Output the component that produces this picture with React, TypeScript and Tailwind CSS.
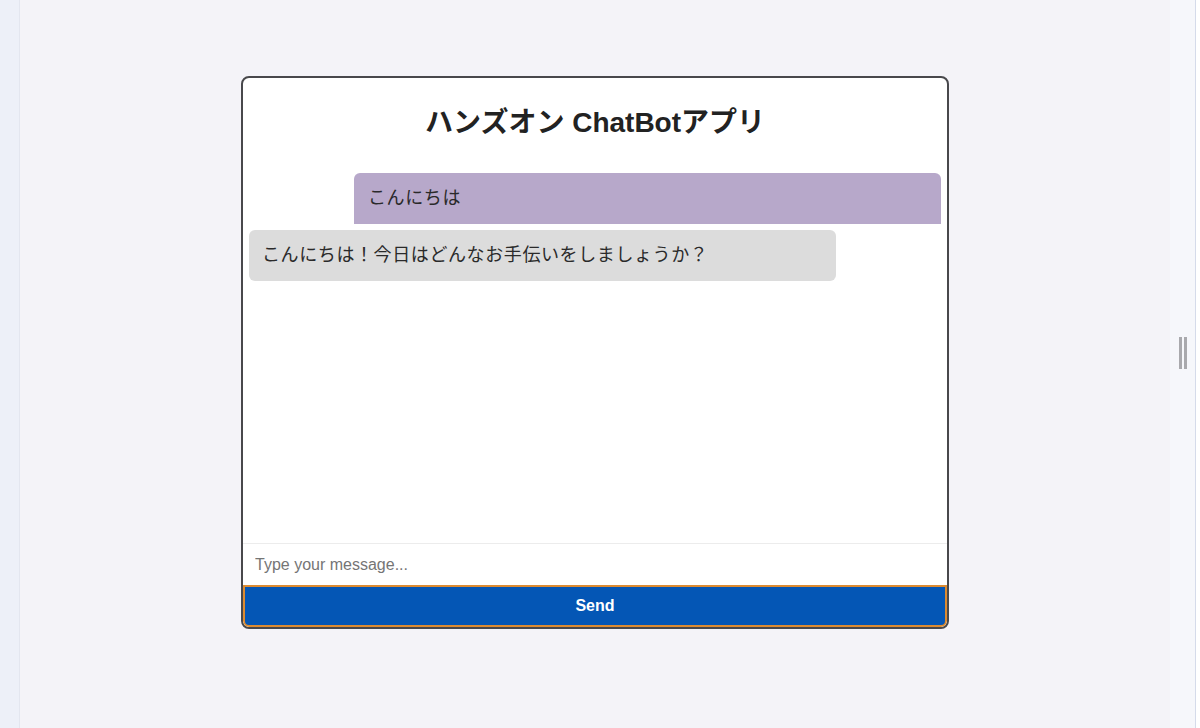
import { useState } from 'react';

type Message = { role: 'user' | 'bot'; text: string };

const initialMessages: Message[] = [
  { role: 'user', text: 'こんにちは' },
  { role: 'bot', text: 'こんにちは！今日はどんなお手伝いをしましょうか？' },
];

function Bubble({ message }: { message: Message }) {
  if (message.role === 'user') {
    return (
      <div className="flex justify-end">
        <div className="w-[587px] h-[51px] flex items-center px-[14px] bg-[#b7a8ca] rounded-t-[6px] text-[18px] tracking-[0.6px] text-[#2a2a2a]">
          {message.text}
        </div>
      </div>
    );
  }
  return (
    <div className="flex justify-start">
      <div className="w-[587px] h-[51px] flex items-center px-[13px] bg-[#dcdcdc] rounded-[6px] text-[18px] tracking-[0.6px] text-[#2a2a2a]">
        {message.text}
      </div>
    </div>
  );
}

export default function App() {
  const [messages] = useState<Message[]>(initialMessages);
  const [draft, setDraft] = useState('');

  return (
    <div
      className="flex h-[728px] w-full overflow-hidden"
      style={{ fontFamily: '"Liberation Sans", "Noto Sans CJK JP", sans-serif' }}
    >
      <div className="w-[20px] shrink-0 bg-[#edf0f8] border-r border-[#e3e6ef]" />

      <main className="flex-1 bg-[#f4f3f8] flex justify-center pt-[76px]">
        <div className="w-[708px] h-[553px] flex flex-col bg-white border-2 border-[#48484c] rounded-[8px] overflow-hidden">
          <h1 className="pt-[26px] text-center text-[28px] leading-[38px] font-bold text-[#222]">
            ハンズオン ChatBotアプリ
          </h1>

          <div className="flex-1 flex flex-col gap-[6px] pt-[31px] px-[6px]">
            {messages.map((m, i) => (
              <Bubble key={i} message={m} />
            ))}
          </div>

          <input
            value={draft}
            onChange={(e) => setDraft(e.target.value)}
            placeholder="Type your message..."
            className="h-[42px] px-[12px] border-t border-[#ececec] text-[16px] text-[#333] placeholder:text-[#757575] outline-none"
          />
          <button className="h-[42px] bg-[#0456b5] border-2 border-[#dd8b31] rounded-b-[6px] text-white text-[16px] font-bold">
            Send
          </button>
        </div>
      </main>

      <div className="w-[30px] shrink-0 bg-[#f6f7fb] flex">
        <div className="flex-1 flex justify-center pt-[337px]">
          <div className="flex gap-[2px] h-[32px]">
            <span className="w-[3px] h-full bg-[#a9a9ad]" />
            <span className="w-[3px] h-full bg-[#a9a9ad]" />
          </div>
        </div>
        <div className="w-[1px] bg-[#d5dbea]" />
        <div className="w-[4px] bg-white" />
      </div>
    </div>
  );
}
